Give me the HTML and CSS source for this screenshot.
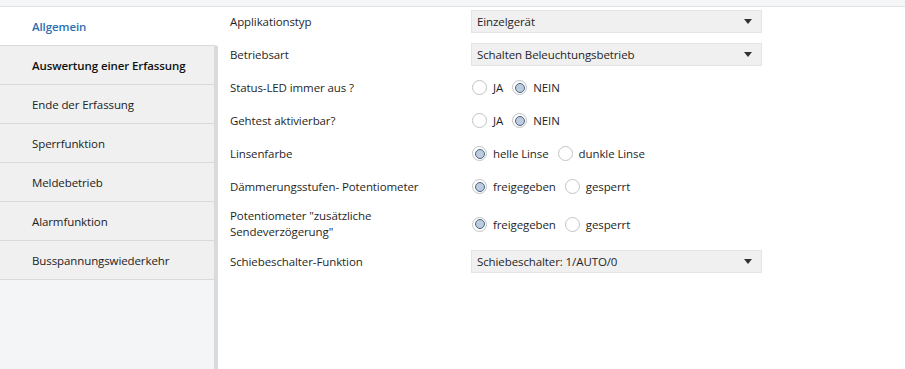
FILE: index.html
```html
<!DOCTYPE html>
<html lang="de">
<head>
    <meta charset="UTF-8">
    <title>Parameter</title>
    <link rel="stylesheet" href="styles.css">
</head>
<body>
    <div class="topbar"></div>
    <div class="layout">
        <nav class="sidebar">
            <a class="nav-item active">Allgemein</a>
            <a class="nav-item strong">Auswertung einer Erfassung</a>
            <a class="nav-item">Ende der Erfassung</a>
            <a class="nav-item">Sperrfunktion</a>
            <a class="nav-item">Meldebetrieb</a>
            <a class="nav-item">Alarmfunktion</a>
            <a class="nav-item">Busspannungswiederkehr</a>
            <div class="nav-fill"></div>
        </nav>

        <main class="params">
            <div class="row">
                <div class="label">Applikationstyp</div>
                <div class="select"><span>Einzelgerät</span><i class="caret"></i></div>
            </div>
            <div class="row">
                <div class="label">Betriebsart</div>
                <div class="select"><span>Schalten Beleuchtungsbetrieb</span><i class="caret"></i></div>
            </div>
            <div class="row">
                <div class="label">Status-LED immer aus ?</div>
                <div class="radios">
                    <label class="radio"><i class="dot"></i>JA</label>
                    <label class="radio"><i class="dot on"></i>NEIN</label>
                </div>
            </div>
            <div class="row">
                <div class="label">Gehtest aktivierbar?</div>
                <div class="radios">
                    <label class="radio"><i class="dot"></i>JA</label>
                    <label class="radio"><i class="dot on"></i>NEIN</label>
                </div>
            </div>
            <div class="row">
                <div class="label">Linsenfarbe</div>
                <div class="radios">
                    <label class="radio"><i class="dot on"></i>helle Linse</label>
                    <label class="radio"><i class="dot"></i>dunkle Linse</label>
                </div>
            </div>
            <div class="row">
                <div class="label">Dämmerungsstufen- Potentiometer</div>
                <div class="radios">
                    <label class="radio"><i class="dot on"></i>freigegeben</label>
                    <label class="radio"><i class="dot"></i>gesperrt</label>
                </div>
            </div>
            <div class="row">
                <div class="label two-line">Potentiometer "zusätzliche Sendeverzögerung"</div>
                <div class="radios">
                    <label class="radio"><i class="dot on"></i>freigegeben</label>
                    <label class="radio"><i class="dot"></i>gesperrt</label>
                </div>
            </div>
            <div class="row">
                <div class="label">Schiebeschalter-Funktion</div>
                <div class="select"><span>Schiebeschalter: 1/AUTO/0</span><i class="caret"></i></div>
            </div>
        </main>
    </div>
</body>
</html>
```

FILE: styles.css
```css
html, body {
    height: 100%;
}
body {
    margin: 0;
    font-family: "Open Sans", "Noto Sans", sans-serif;
    font-size: 11.5px;
    letter-spacing: -0.1px;
    color: #1f1f1f;
    background: #fff;
    display: flex;
    flex-direction: column;
}
.topbar {
    height: 6px;
    background: #f5f6f7;
    border-bottom: 1px solid #e1e2e3;
}
.layout {
    flex: 1;
    display: flex;
}

/* left navigation */
.sidebar {
    width: 218px;
    display: flex;
    flex-direction: column;
    background: #f4f5f7;
}
.nav-item {
    box-sizing: border-box;
    height: 39px;
    padding-left: 32px;
    display: flex;
    align-items: center;
    background: #f0f0f0;
    border-bottom: 1px solid #dadada;
    border-right: 4px solid #d9dadb;
    color: #222;
}
.nav-item.active {
    background: #fff;
    border-right-color: #fff;
    color: #2b6fb0;
    font-weight: 600;
}
.nav-item.strong {
    font-weight: 600;
    color: #111;
}
.nav-fill {
    flex: 1;
    border-right: 4px solid #d9dadb;
}

/* parameter list */
.params {
    flex: 1;
    padding: 3px 0 0 12px;
    display: flex;
    flex-direction: column;
    gap: 10px;
}
.row {
    display: flex;
    align-items: center;
    min-height: 23px;
}
.label {
    width: 241px;
    flex-shrink: 0;
}
.label.two-line {
    width: 180px;
    margin-right: 61px;
    line-height: 16px;
}
.select {
    box-sizing: border-box;
    width: 291px;
    height: 23px;
    padding: 0 5px;
    display: flex;
    align-items: center;
    justify-content: space-between;
    background: #f0f0f0;
    border: 1px solid #e4e4e4;
}
.caret {
    width: 0;
    height: 0;
    margin-right: 4px;
    border-left: 4px solid transparent;
    border-right: 4px solid transparent;
    border-top: 5px solid #333;
}
.radios {
    display: flex;
    gap: 9px;
    padding-left: 1px;
}
.radio {
    display: flex;
    align-items: center;
    gap: 6px;
}
.dot {
    box-sizing: border-box;
    width: 15px;
    height: 15px;
    border-radius: 50%;
    border: 1px solid #c4c4c4;
    background: #fff;
    position: relative;
}
.dot.on::after {
    content: "";
    position: absolute;
    left: 1.5px;
    top: 1.5px;
    box-sizing: border-box;
    width: 10px;
    height: 10px;
    border-radius: 50%;
    border: 1px solid #4c6384;
    background: #bccbdd;
}
```
